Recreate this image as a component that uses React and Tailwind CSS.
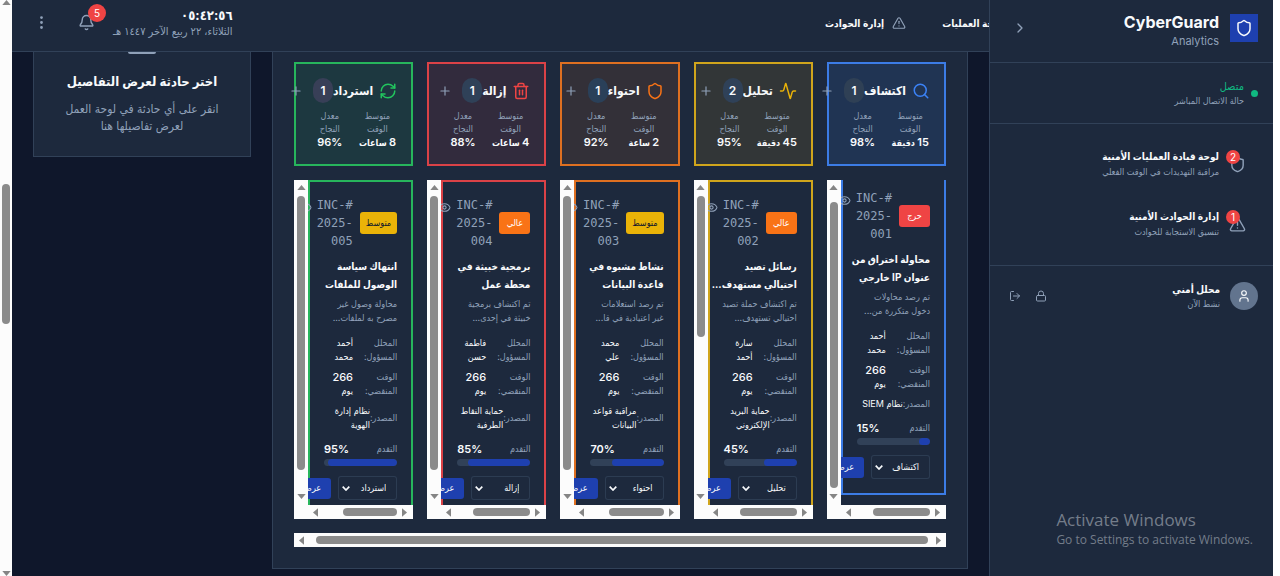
import React from 'react';
import {
  Activity,
  Bell,
  ChevronRight,
  EllipsisVertical,
  Eye,
  Lock,
  LogOut,
  Plus,
  RefreshCw,
  Search,
  Shield,
  Trash2,
  TriangleAlert,
  User,
} from 'lucide-react';

const stages = [
  {
    name: 'اكتشاف',
    count: 1,
    icon: Search,
    time: ['15', 'دقيقة'],
    rate: '98%',
    iconColor: 'text-[#3b82f6]',
    box: 'border-[#3c7ce6] bg-[#3b82f6]/12',
    cardBorder: 'border-[#3c7ce6]',
    pill: 'bg-[#2f4055]',
    vThumb: 'mt-1.5',
    hThumb: 'w-[57px]',
    cardShift: '-mt-[7px]',
    card: {
      id: '#INC-2025-001',
      level: 'حرج',
      levelStyle: 'bg-[#ef4444] text-white',
      title: ['محاولة اختراق من', 'عنوان IP خارجي'],
      text: ['تم رصد محاولات', 'دخول متكررة من...'],
      analyst: ['أحمد', 'محمد'],
      source: ['نظام SIEM'],
      progress: 15,
    },
  },
  {
    name: 'تحليل',
    count: 2,
    icon: Activity,
    time: ['45', 'دقيقة'],
    rate: '95%',
    iconColor: 'text-[#eab308]',
    box: 'border-[#d0a51c] bg-[#eab308]/10',
    cardBorder: 'border-[#d0a51c]',
    pill: 'bg-[#2f4158]',
    vThumb: 'mb-[151px]',
    hThumb: 'w-[57px]',
    cardShift: '',
    card: {
      id: '#INC-2025-002',
      level: 'عالي',
      levelStyle: 'bg-[#f97316] text-white',
      title: ['رسائل تصيد', 'احتيالي مستهدف...'],
      text: ['تم اكتشاف حملة تصيد', 'احتيالي تستهدف...'],
      analyst: ['سارة', 'أحمد'],
      source: ['حماية البريد', 'الإلكتروني'],
      progress: 45,
    },
  },
  {
    name: 'احتواء',
    count: 1,
    icon: Shield,
    time: ['2', 'ساعة'],
    rate: '92%',
    iconColor: 'text-[#f97316]',
    box: 'border-[#df7021] bg-[#f97316]/10',
    cardBorder: 'border-[#df7021]',
    pill: 'bg-[#2a4059]',
    vThumb: 'mb-[18px]',
    hThumb: 'w-[55px]',
    cardShift: '',
    card: {
      id: '#INC-2025-003',
      level: 'متوسط',
      levelStyle: 'bg-[#eab308] text-slate-900',
      title: ['نشاط مشبوه في', 'قاعدة البيانات'],
      text: ['تم رصد استعلامات', 'غير اعتيادية في قا...'],
      analyst: ['محمد', 'علي'],
      source: ['مراقبة قواعد', 'البيانات'],
      progress: 70,
    },
  },
  {
    name: 'إزالة',
    count: 1,
    icon: Trash2,
    time: ['4', 'ساعات'],
    rate: '88%',
    iconColor: 'text-[#ef4444]',
    box: 'border-[#db4247] bg-[#ef4444]/10',
    cardBorder: 'border-[#db4247]',
    pill: 'bg-[#2f4158]',
    vThumb: 'mb-[18px]',
    hThumb: 'w-[57px]',
    cardShift: '',
    card: {
      id: '#INC-2025-004',
      level: 'عالي',
      levelStyle: 'bg-[#f97316] text-white',
      title: ['برمجية خبيثة في', 'محطة عمل'],
      text: ['تم اكتشاف برمجية', 'خبيثة في إحدى...'],
      analyst: ['فاطمة', 'حسن'],
      source: ['حماية النقاط', 'الطرفية'],
      progress: 85,
    },
  },
  {
    name: 'استرداد',
    count: 1,
    icon: RefreshCw,
    time: ['8', 'ساعات'],
    rate: '96%',
    iconColor: 'text-[#22c55e]',
    box: 'border-[#27b55c] bg-[#22c55e]/10',
    cardBorder: 'border-[#27b55c]',
    pill: 'bg-[#383f57]',
    vThumb: 'mb-[18px]',
    hThumb: 'w-[54px]',
    cardShift: '',
    card: {
      id: '#INC-2025-005',
      level: 'متوسط',
      levelStyle: 'bg-[#eab308] text-slate-900',
      title: ['انتهاك سياسة', 'الوصول للملفات'],
      text: ['محاولة وصول غير', 'مصرح به لملفات...'],
      analyst: ['أحمد', 'محمد'],
      source: ['نظام إدارة', 'الهوية'],
      progress: 95,
    },
  },
];

const arrowPaths = {
  up: 'M0 6 5 0 10 6Z',
  down: 'M0 0 5 6 10 0Z',
  left: 'M6 0 0 5 6 10Z',
  right: 'M0 0 6 5 0 10Z',
};

function Arrow({ dir }) {
  const upright = dir === 'up' || dir === 'down';
  return (
    <svg
      className="shrink-0 fill-[#858585]"
      width={upright ? 9 : 5}
      height={upright ? 5 : 9}
      viewBox={upright ? '0 0 10 6' : '0 0 6 10'}
      aria-hidden="true"
    >
      <path d={arrowPaths[dir]} />
    </svg>
  );
}

function VerticalBar({ thumb }) {
  return (
    <div className="flex w-3.5 shrink-0 flex-col items-center bg-[#fcfcfc] pt-[5px] pb-1.5">
      <Arrow dir="up" />
      <div className="flex w-2 flex-1 flex-col py-1.5">
        <div className={`flex-1 rounded-full bg-[#8b8b8b] ${thumb}`} />
      </div>
      <Arrow dir="down" />
    </div>
  );
}

function Lines({ items }) {
  return (
    <span className="block whitespace-nowrap">
      {items.map((line) => (
        <span key={line} className="block">
          {line}
        </span>
      ))}
    </span>
  );
}

function StageHeader({ stage }) {
  const Icon = stage.icon;
  return (
    <div className={`h-26 border-2 p-3.5 ${stage.box}`}>
      <div className="flex items-center">
        <Icon className={`ml-1.5 size-[18px] shrink-0 ${stage.iconColor}`} />
        <h3 className="text-xs font-bold whitespace-nowrap text-slate-50">{stage.name}</h3>
        <span
          className={`flex h-[25px] w-5 shrink-0 items-center justify-center rounded-full text-xs font-semibold text-slate-50 ${stage.pill}`}
        >
          {stage.count}
        </span>
        <button type="button" aria-label="إضافة" className="mr-2.5 shrink-0 text-slate-400">
          <Plus className="size-3.5" />
        </button>
      </div>
      <dl className="mt-1.5 grid grid-cols-2 gap-2 text-center text-[9px] leading-[13px] whitespace-nowrap">
        <div>
          <dt className="text-slate-400">
            متوسط
            <br />
            الوقت
          </dt>
          <dd className="leading-3.5 font-semibold text-slate-50">
            <span className="text-[11px]">{stage.time[0]}</span> {stage.time[1]}
          </dd>
        </div>
        <div>
          <dt className="text-slate-400">
            معدل
            <br />
            النجاح
          </dt>
          <dd className="text-[11px] leading-3.5 font-semibold text-slate-50">{stage.rate}</dd>
        </div>
      </dl>
    </div>
  );
}

function IncidentCard({ stage }) {
  const c = stage.card;
  return (
    <article className={`border-2 p-3.5 ${stage.cardBorder} ${stage.cardShift}`}>
      <div className="flex items-center">
        <span
          className={`ml-[7px] min-w-[31px] shrink-0 rounded-[3px] px-1.5 text-center text-[9px] leading-[22px] ${c.levelStyle}`}
        >
          {c.level}
        </span>
        <span className="w-[37px] shrink-0 font-['DejaVu_Sans_Mono',monospace] text-xs leading-[18px] text-slate-400">
          {c.id}
        </span>
        <button type="button" aria-label="عرض الحادثة" className="mr-1 mb-8 shrink-0 text-slate-400">
          <Eye className="size-[13px]" />
        </button>
      </div>
      <h4 className="mt-[7px] text-[10px] leading-[18px] font-bold text-slate-50">
        <Lines items={c.title} />
      </h4>
      <p className="mt-1 text-[9px] leading-3.5 text-slate-400">
        <Lines items={c.text} />
      </p>
      <dl className="mt-[11px] flex flex-col gap-1.5 text-[9px] leading-3.5">
        <div className="flex justify-between">
          <dt className="text-slate-400">
            <Lines items={['المحلل', 'المسؤول:']} />
          </dt>
          <dd className="w-[29px] shrink-0 text-slate-50">
            <Lines items={c.analyst} />
          </dd>
        </div>
        <div className="flex justify-between">
          <dt className="text-slate-400">
            <Lines items={['الوقت', 'المنقضي:']} />
          </dt>
          <dd className="w-[29px] shrink-0 text-slate-50">
            <span className="block text-[11px] font-medium">266</span>
            <span className="block">يوم</span>
          </dd>
        </div>
        <div className="flex items-center">
          <dt className="shrink-0 text-slate-400">المصدر:</dt>
          <dd className="text-slate-50">
            <Lines items={c.source} />
          </dd>
        </div>
      </dl>
      <div className="mt-2.5 flex justify-between text-[9px] leading-3.5">
        <span className="text-slate-400">التقدم</span>
        <span className="text-[11px] font-semibold text-slate-50">{c.progress}%</span>
      </div>
      <div className="mt-[3px] h-[7px] overflow-hidden rounded-full bg-slate-700">
        <div className="h-full rounded-full bg-[#1e40af]" style={{ width: `${c.progress}%` }} />
      </div>
      <div className="mt-2.5 flex items-center gap-[7px]">
        <div className="relative shrink-0">
          <select
            aria-label="المرحلة"
            defaultValue={stage.name}
            className="block h-6 w-[59px] appearance-none rounded-[3px] border border-slate-700/80 bg-slate-800 pr-2.5 text-[9px] text-slate-50"
          >
            {stages.map((s) => (
              <option key={s.name}>{s.name}</option>
            ))}
          </select>
          <svg
            className="pointer-events-none absolute top-2.5 left-1 h-[5px] w-2 fill-none stroke-slate-50"
            viewBox="0 0 8 5"
            aria-hidden="true"
          >
            <path d="M0.7 0.7 4 4 7.3 0.7" strokeWidth="1.7" />
          </svg>
        </div>
        <button
          type="button"
          className="h-[21px] shrink-0 rounded-[3px] bg-[#1e40af] px-2.5 text-[9px] text-slate-50"
        >
          عرض
        </button>
      </div>
    </article>
  );
}

function StageList({ stage }) {
  return (
    <div className="flex h-[339px] flex-col">
      <div className="flex min-h-0 flex-1">
        <div className="min-w-0 flex-1 overflow-hidden">
          <IncidentCard stage={stage} />
        </div>
        <VerticalBar thumb={stage.vThumb} />
      </div>
      <div className="flex h-3.5 items-center bg-[#fcfcfc] pr-1.5 pl-[19px]">
        <Arrow dir="right" />
        <div className={`mr-[5px] h-2 rounded-full bg-[#8b8b8b] ${stage.hThumb}`} />
        <div className="flex-1" />
        <Arrow dir="left" />
      </div>
    </div>
  );
}

function NavItem({ icon: Icon, count, title, text }) {
  return (
    <a href="#" className="flex h-[60px] items-center gap-2.5 px-[27px]">
      <span className="relative shrink-0">
        <Icon className="size-[17px] text-slate-400" />
        <span className="absolute -top-1.5 left-[-3px] flex size-3.5 items-center justify-center rounded-full bg-[#ef4444] text-[10px] leading-none text-white">
          {count}
        </span>
      </span>
      <span>
        <span className="block text-[10px] leading-4 font-semibold text-slate-50">{title}</span>
        <span className="block text-[9px] leading-4 text-slate-400">{text}</span>
      </span>
    </a>
  );
}

function Sidebar() {
  return (
    <aside className="flex w-[284px] shrink-0 flex-col border-l border-slate-700 bg-slate-800">
      <div className="flex h-[63px] items-start border-b border-slate-700 px-[15px] pt-3.5">
        <span className="flex size-7 items-center justify-center bg-[#1e40af]">
          <Shield className="size-[18px] text-slate-50" />
        </span>
        <div className="mr-[11px] -mt-0.5" dir="ltr">
          <h1 className="text-right text-base leading-5 font-bold text-slate-50">CyberGuard</h1>
          <p className="text-right text-[11px] leading-[18px] text-slate-400">Analytics</p>
        </div>
        <button type="button" aria-label="طي القائمة" className="mr-auto ml-[7px] mt-1.5 text-slate-400">
          <ChevronRight className="size-4" />
        </button>
      </div>
      <div className="flex h-[61px] items-center gap-[7px] border-b border-slate-700 px-[15px]">
        <span className="size-[7px] rounded-full bg-[#10b981]" />
        <div>
          <p className="text-[11px] leading-4 text-[#10b981]">متصل</p>
          <p className="text-[9px] leading-3.5 text-slate-400">حالة الاتصال المباشر</p>
        </div>
      </div>
      <nav className="border-b border-slate-700 pt-2.5 pb-[11px]">
        <NavItem
          icon={Shield}
          count={2}
          title="لوحة قيادة العمليات الأمنية"
          text="مراقبة التهديدات في الوقت الفعلي"
        />
        <NavItem
          icon={TriangleAlert}
          count={1}
          title="إدارة الحوادث الأمنية"
          text="تنسيق الاستجابة للحوادث"
        />
      </nav>
      <div className="flex h-[60px] items-center px-[15px]">
        <span className="flex size-7 items-center justify-center rounded-full bg-slate-500">
          <User className="size-3.5 text-slate-50" />
        </span>
        <div className="mr-2.5">
          <p className="text-[10px] leading-4 font-semibold text-slate-50">محلل أمني</p>
          <p className="text-[9px] leading-3.5 text-slate-400">نشط الآن</p>
        </div>
        <div className="mr-auto ml-1 flex gap-3.5 text-slate-400">
          <button type="button" aria-label="قفل">
            <Lock className="size-3" />
          </button>
          <button type="button" aria-label="تسجيل الخروج">
            <LogOut className="size-3" />
          </button>
        </div>
      </div>
      <div
        dir="ltr"
        className="mt-auto pr-5 pb-[26px] text-right font-['Open_Sans',sans-serif] whitespace-nowrap text-[#747d8a]"
      >
        <div className="inline-block text-left">
          <p className="text-[17px] leading-6">Activate Windows</p>
          <p className="text-xs leading-4">Go to Settings to activate Windows.</p>
        </div>
      </div>
    </aside>
  );
}

function TopBar() {
  return (
    <header className="flex h-[52px] shrink-0 items-start border-b border-slate-700 bg-slate-800 pl-[21px]">
      <nav className="flex items-center text-[10px] leading-[46px] font-semibold whitespace-nowrap text-slate-50">
        <a href="#" className="-mr-3.5">
          لوحة العمليات
        </a>
        <a href="#" className="mr-9 flex items-center gap-2">
          <TriangleAlert className="size-3.5 text-slate-400" />
          إدارة الحوادث
        </a>
      </nav>
      <div className="mr-auto whitespace-nowrap">
        <p className="pt-1.5 text-[13px] leading-[18px] font-bold text-slate-50">٠٥:٤٢:٥٦</p>
        <p className="text-[11px] leading-3.5 text-slate-400">الثلاثاء، ٢٢ ربيع الآخر ١٤٤٧ هـ</p>
      </div>
      <button type="button" aria-label="الإشعارات" className="relative mt-3.5 mr-[18px] text-slate-400">
        <Bell className="size-[17px]" />
        <span className="absolute -top-2.5 left-2.5 flex size-[18px] items-center justify-center rounded-full bg-[#ef4444] text-[10px] leading-none text-white">
          5
        </span>
      </button>
      <button type="button" aria-label="المزيد" className="mt-3.5 mr-7 text-slate-400">
        <EllipsisVertical className="size-[17px]" />
      </button>
    </header>
  );
}

function Board() {
  return (
    <section className="min-w-0 flex-1 border-x border-b border-slate-700 bg-slate-800 px-[21px] pt-2.5 pb-[21px]">
      <div className="grid grid-cols-5 gap-3.5">
        {stages.map((s) => (
          <StageHeader key={s.name} stage={s} />
        ))}
        {stages.map((s) => (
          <StageList key={s.name} stage={s} />
        ))}
      </div>
      <div className="mt-3.5 flex h-3.5 items-center bg-[#fcfcfc] px-[5px]">
        <Arrow dir="right" />
        <div className="mr-2 ml-3 h-2 flex-1 rounded-full bg-[#8b8b8b]" />
        <Arrow dir="left" />
      </div>
    </section>
  );
}

function Details() {
  return (
    <section className="w-[218px] shrink-0 border-x border-b border-slate-700 bg-slate-800 px-5 pb-[22px] text-center">
      <div className="mx-auto h-0.5 w-7 rounded-b-sm bg-slate-400" />
      <h2 className="mt-4 text-[13px] leading-[22px] font-bold whitespace-nowrap text-slate-50">
        اختر حادثة لعرض التفاصيل
      </h2>
      <p className="mt-2 text-xs leading-[17px] text-slate-400">
        <Lines items={['انقر على أي حادثة في لوحة العمل', 'لعرض تفاصيلها هنا']} />
      </p>
    </section>
  );
}

export default function App() {
  return (
    <div
      dir="rtl"
      className="flex h-screen overflow-hidden bg-slate-900 font-['Inter','DejaVu_Sans_Condensed','DejaVu_Sans',sans-serif]"
    >
      <div className="w-[7px] shrink-0 bg-white" />
      <Sidebar />
      <div className="flex min-w-0 flex-1 flex-col overflow-hidden">
        <TopBar />
        <main className="flex items-start gap-[21px] px-[21px]">
          <Board />
          <Details />
        </main>
      </div>
      <div className="flex w-3 shrink-0 flex-col items-center bg-[#fcfcfc]">
        <Arrow dir="up" />
        <div className="flex flex-1 flex-col pt-[179px]">
          <div className="h-[140px] w-2 rounded-full bg-[#8b8b8b]" />
        </div>
        <Arrow dir="down" />
      </div>
    </div>
  );
}
